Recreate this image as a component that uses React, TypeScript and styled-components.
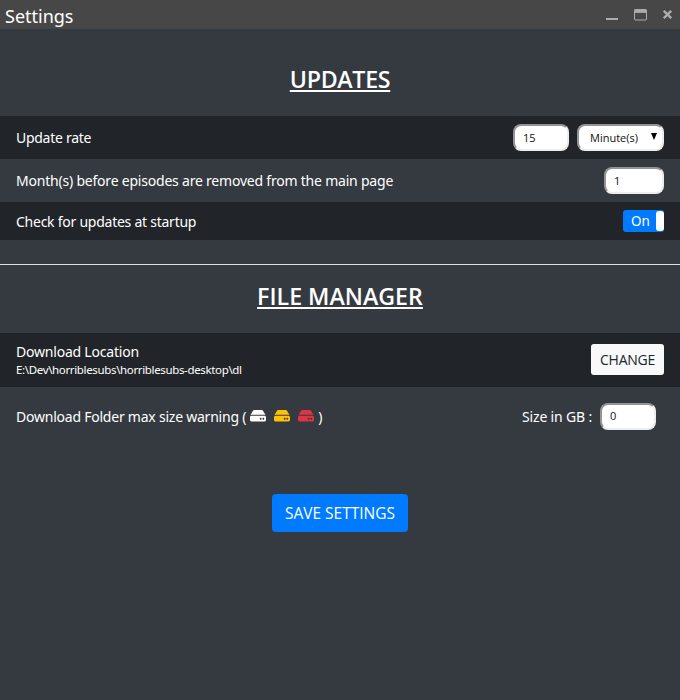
import React from "react";
import styled, { createGlobalStyle } from "styled-components";
import { FaHdd } from "react-icons/fa";

const GlobalStyle = createGlobalStyle`
  *, *::before, *::after { box-sizing: border-box; }
  body {
    margin: 0;
    background: #343a40;
    color: #fff;
    font-family: "Noto Sans", "Open Sans", sans-serif;
    font-size: 14px;
  }
`;

const Window = styled.div`
  display: flex;
  flex-direction: column;
  height: 700px;
  overflow: hidden;
  background: #343a40;
`;

const TitleBar = styled.header`
  display: flex;
  align-items: center;
  justify-content: space-between;
  height: 29px;
  padding: 0 8px 0 5px;
  background: #474747;
`;

const WindowTitle = styled.span`
  padding-top: 3px;
  font-size: 18px;
  line-height: 26px;
`;

const WindowControls = styled.div`
  display: flex;
  color: #acacac;
  gap: 16px;
`;

const ControlIcon = styled.svg`
  display: block;
  height: 12px;
`;

const SectionHeader = styled.div<{ $height: number; $top?: number; $bottom?: number }>`
  display: flex;
  align-items: center;
  justify-content: center;
  height: ${(p) => p.$height}px;
  padding-top: ${(p) => p.$top ?? 0}px;
  padding-bottom: ${(p) => p.$bottom ?? 0}px;
`;

const SectionTitle = styled.h2<{ $track?: number }>`
  margin: 0;
  font-family: "Open Sans", "Noto Sans", sans-serif;
  font-size: 23.2px;
  font-weight: 600;
  line-height: 30px;
  letter-spacing: ${(p) => p.$track ?? 0}px;
  text-decoration: underline;
  text-decoration-thickness: 2px;
  text-underline-offset: 2px;
  text-decoration-skip-ink: none;
`;

const Row = styled.div<{ $height: number; $dark?: boolean; $right?: number }>`
  display: flex;
  align-items: center;
  justify-content: space-between;
  height: ${(p) => p.$height}px;
  padding: 0 ${(p) => p.$right ?? 16}px 0 16px;
  background: ${(p) => (p.$dark ? "#212529" : "transparent")};
`;

const Label = styled.span<{ $track?: number }>`
  letter-spacing: ${(p) => p.$track ?? -0.21}px;
  line-height: 19px;
  white-space: pre;
`;

const Path = styled.span`
  font-size: 11.5px;
  line-height: 18px;
  letter-spacing: -0.35px;
  white-space: nowrap;
`;

const Stack = styled.div`
  display: flex;
  flex-direction: column;
`;

const Controls = styled.div`
  display: flex;
  align-items: center;
  gap: 8px;
`;

const TextInput = styled.input<{ $width: number }>`
  width: ${(p) => p.$width}px;
  height: 27px;
  margin: 0;
  padding: 0 8px 1px;
  border: 2px solid;
  border-color: #949494 #ededed #ededed #949494;
  border-radius: 8px;
  outline: none;
  background: #fff;
  color: #111;
  font: 11px "Open Sans", "Noto Sans", sans-serif;
`;

const SelectBox = styled.button`
  display: flex;
  align-items: center;
  justify-content: space-between;
  width: 87px;
  height: 27px;
  padding: 0 5px 1px 11px;
  border: 2px solid;
  border-color: #949494 #ededed #ededed #949494;
  border-radius: 8px;
  background: #fff;
  color: #111;
  font: 11px "Open Sans", "Noto Sans", sans-serif;
`;

const Arrow = styled.svg`
  display: block;
  width: 6px;
  height: 7px;
  margin-bottom: 1px;
`;

const Toggle = styled.button`
  display: flex;
  align-items: center;
  justify-content: space-between;
  width: 41px;
  height: 22px;
  padding: 0 0 0 8px;
  border: 1px solid #007bff;
  border-width: 1px 0;
  border-radius: 3px;
  background: #007bff;
  color: #fff;
  font: 13.5px/20px "Noto Sans", sans-serif;
`;

const ToggleText = styled.span`
  padding-bottom: 1px;
  line-height: 18px;
`;

const Knob = styled.span`
  width: 8px;
  height: 20px;
  border-radius: 3px;
  background: #fff;
`;

const ChangeButton = styled.button`
  width: 73px;
  height: 31px;
  margin-bottom: 2px;
  padding: 0;
  border: 0;
  border-radius: 3px;
  background: #f8f9fa;
  color: #212529;
  font: 14px/31px "Open Sans", "Noto Sans", sans-serif;
  letter-spacing: -0.25px;
`;

const SaveButton = styled.button`
  align-self: center;
  width: 136px;
  height: 38px;
  margin-top: 49px;
  padding: 0;
  border: 0;
  border-radius: 4px;
  background: #007bff;
  color: #fff;
  font: 15.5px/38px "Open Sans", "Noto Sans", sans-serif;
`;

const Divider = styled.hr`
  width: 100%;
  height: 1px;
  margin: 24px 0 0;
  border: 0;
  background: #dfe0e1;
`;

const Drives = styled.span`
  display: flex;
  gap: 8px;
  margin: 0 4px 1px;
`;

const Drive = styled(FaHdd)<{ $tone: string }>`
  width: 16px;
  height: 15.5px;
  color: ${(p) => p.$tone};
`;

const Warning = styled.div`
  display: flex;
  align-items: center;
`;

export default function App() {
  return (
    <Window>
      <GlobalStyle />
      <TitleBar>
        <WindowTitle>Settings</WindowTitle>
        <WindowControls>
          <ControlIcon width="12" viewBox="0 0 12 12">
            <path d="M0 10h12" stroke="currentColor" strokeWidth="2" />
          </ControlIcon>
          <ControlIcon width="13" viewBox="0 0 13 12">
            <rect x=".5" y=".5" width="12" height="10.5" rx="1" fill="none" stroke="currentColor" />
            <path d="M.5 2.2h12" stroke="currentColor" strokeWidth="3.4" />
          </ControlIcon>
          <ControlIcon width="9" viewBox="0 0 9 12">
            <path d="M.8 1.8l7.4 7.4M8.2 1.8L.8 9.2" stroke="currentColor" strokeWidth="2.5" />
          </ControlIcon>
        </WindowControls>
      </TitleBar>

      <SectionHeader $height={87} $top={12}>
        <SectionTitle $track={-0.3}>UPDATES</SectionTitle>
      </SectionHeader>
      <Row $height={43} $dark>
        <Label $track={-0.28}>Update rate</Label>
        <Controls>
          <TextInput $width={56} defaultValue="15" />
          <SelectBox>
            Minute(s)
            <Arrow viewBox="0 0 6 7">
              <path d="M0 0h6L3 7z" fill="#000" />
            </Arrow>
          </SelectBox>
        </Controls>
      </Row>
      <Row $height={43}>
        <Label>Month(s) before episodes are removed from the main page</Label>
        <TextInput $width={60} defaultValue="1" />
      </Row>
      <Row $height={38} $dark>
        <Label $track={-0.25}>Check for updates at startup</Label>
        <Toggle>
          <ToggleText>On</ToggleText>
          <Knob />
        </Toggle>
      </Row>

      <Divider />

      <SectionHeader $height={68} $bottom={6}>
        <SectionTitle>FILE MANAGER</SectionTitle>
      </SectionHeader>
      <Row $height={54} $dark>
        <Stack>
          <Label>Download Location</Label>
          <Path>E:\Dev\horriblesubs\horriblesubs-desktop\dl</Path>
        </Stack>
        <ChangeButton>CHANGE</ChangeButton>
      </Row>
      <Row $height={58} $right={24}>
        <Warning>
          <Label $track={-0.23}>Download Folder max size warning (</Label>
          <Drives>
            <Drive $tone="#ffffff" preserveAspectRatio="none" />
            <Drive $tone="#ffc107" preserveAspectRatio="none" />
            <Drive $tone="#dc3545" preserveAspectRatio="none" />
          </Drives>
          <Label>)</Label>
        </Warning>
        <Controls>
          <Label $track={-0.17}>Size in GB :</Label>
          <TextInput $width={56} defaultValue="0" />
        </Controls>
      </Row>
      <SaveButton>SAVE SETTINGS</SaveButton>
    </Window>
  );
}
